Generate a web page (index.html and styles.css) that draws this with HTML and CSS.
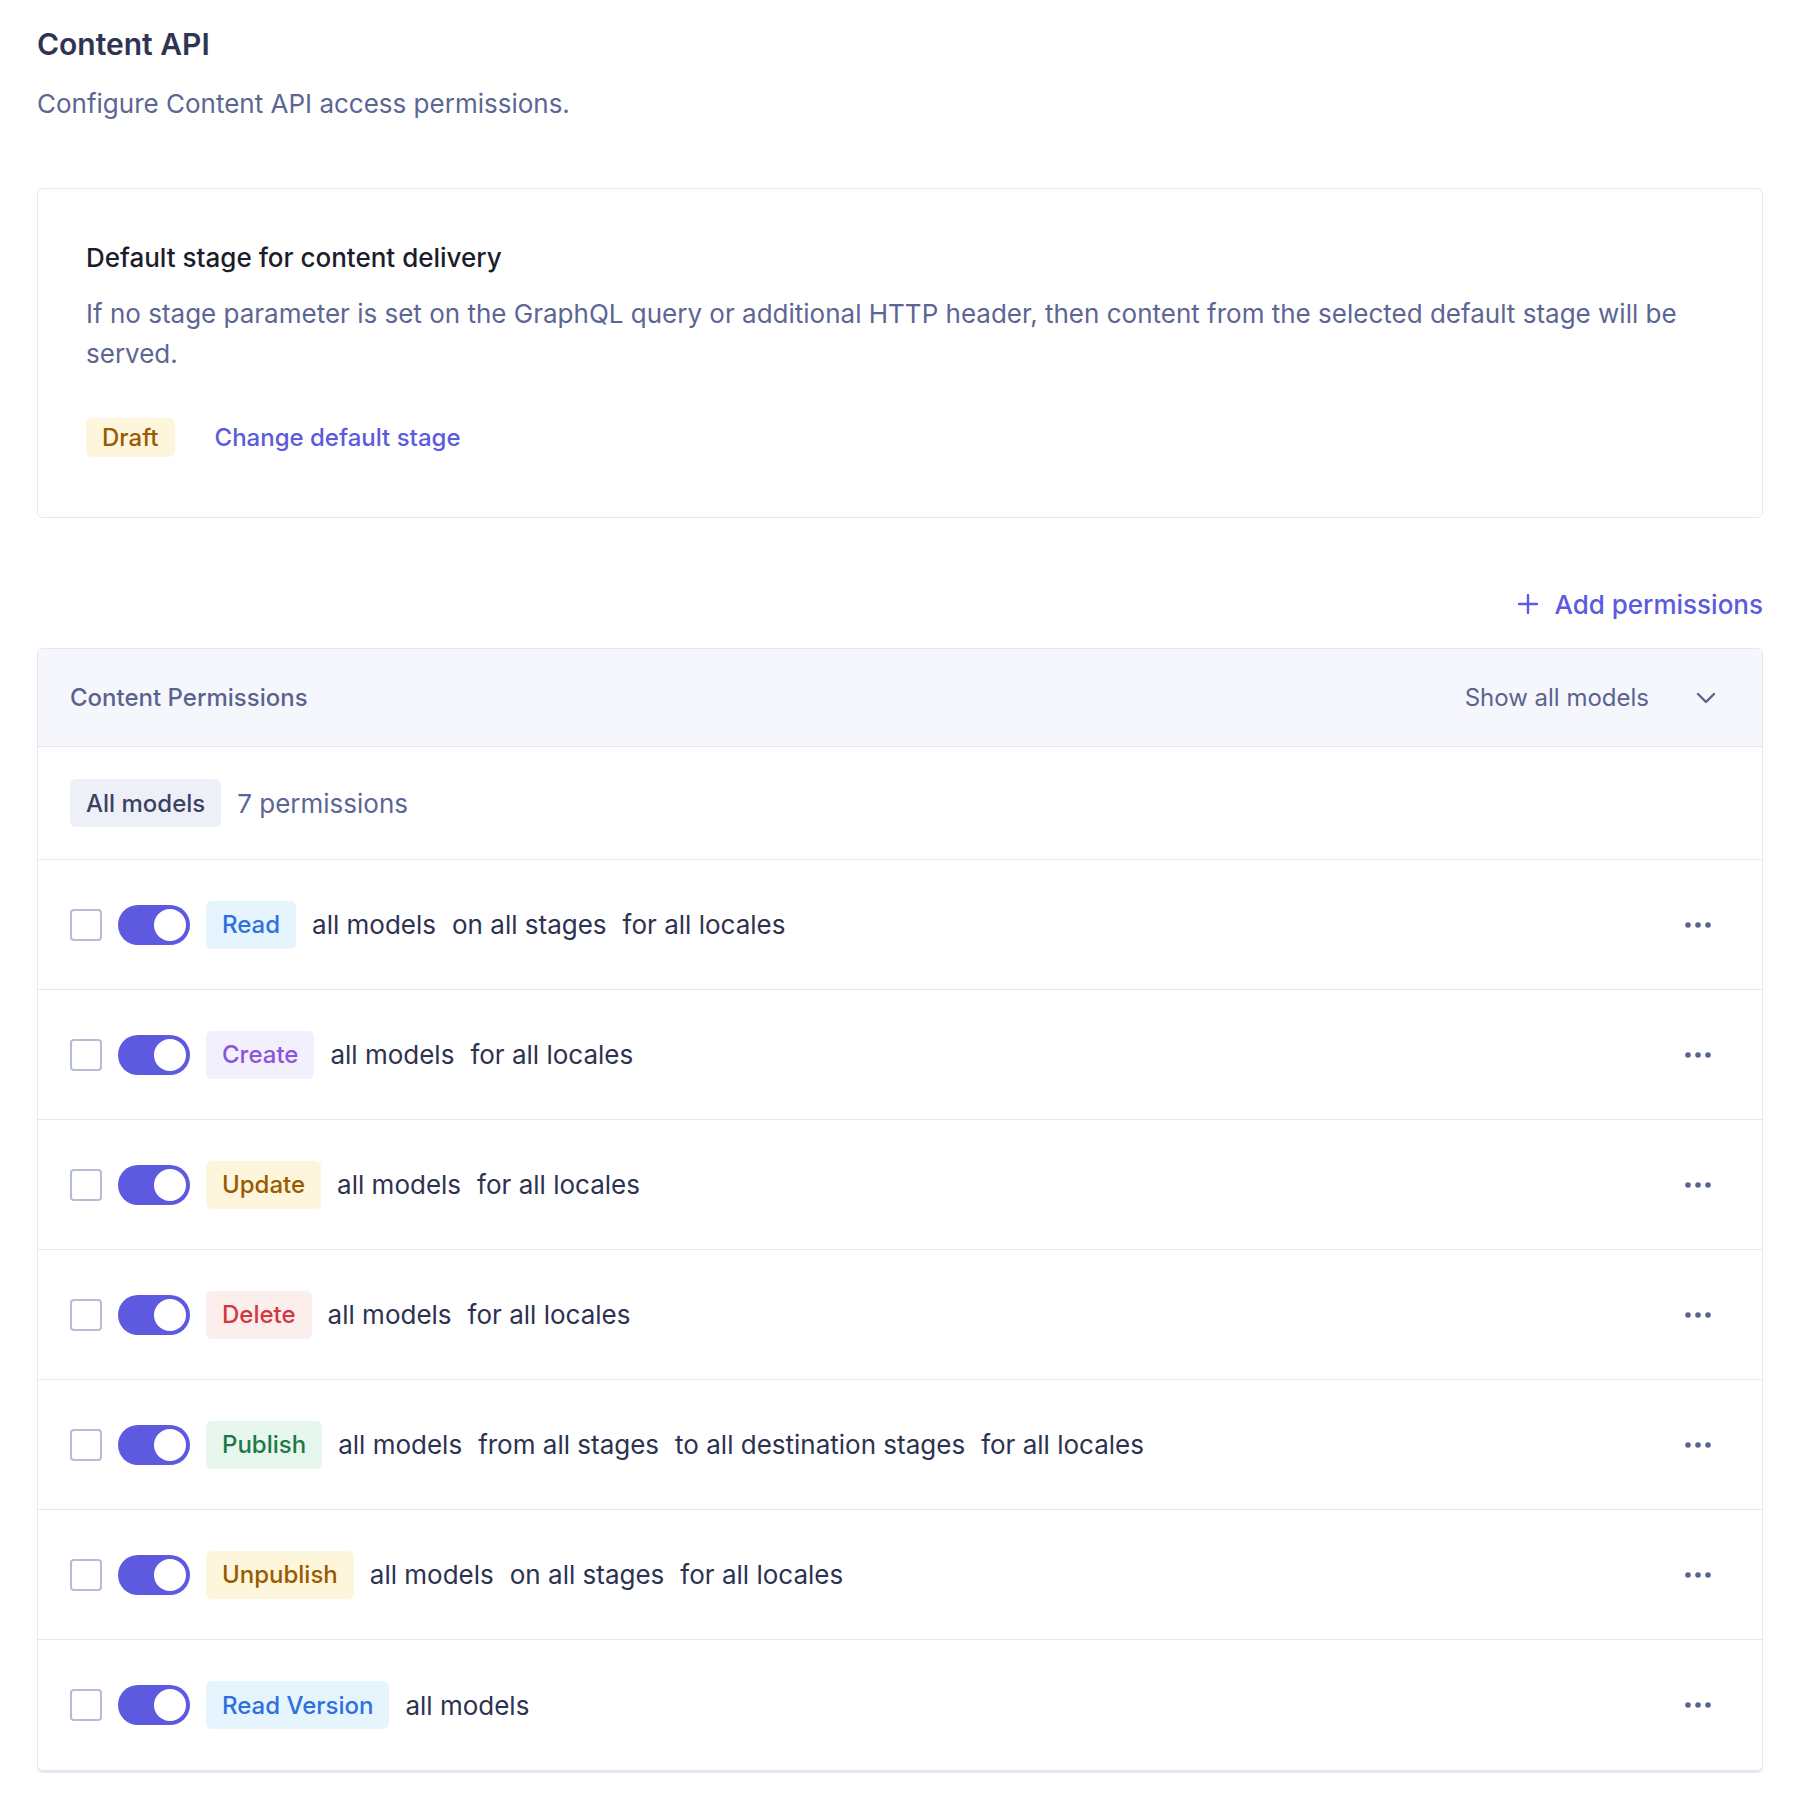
FILE: index.html
```html
<!DOCTYPE html>
<html lang="en">
<head>
<meta charset="utf-8">
<title>Content API</title>
<link rel="stylesheet" href="styles.css">
</head>
<body>
<main class="page">
  <header class="page-head">
    <h1 class="page-title">Content API</h1>
    <p class="page-desc">Configure Content API access permissions.</p>
  </header>

  <section class="card">
    <h2 class="card-title">Default stage for content delivery</h2>
    <p class="card-desc">If no stage parameter is set on the GraphQL query or additional HTTP header, then content from the selected default stage will be served.</p>
    <div class="stage-row">
      <span class="badge badge-amber badge-sm">Draft</span>
      <a class="link" href="#">Change default stage</a>
    </div>
  </section>

  <div class="actions">
    <a class="add-link" href="#">
      <svg class="plus" width="20" height="20" viewBox="0 0 20 20" aria-hidden="true"><path d="M10 1v18M1 10h18" stroke="currentColor" stroke-width="2.4" stroke-linecap="round" fill="none"/></svg>
      <span>Add permissions</span>
    </a>
  </div>

  <section class="table">
    <div class="table-head">
      <span class="table-title">Content Permissions</span>
      <div class="filter">
        <span>Show all models</span>
        <span class="chev-box">
          <svg width="20" height="12" viewBox="0 0 20 12" aria-hidden="true"><path d="M2 2l8 8 8-8" stroke="currentColor" stroke-width="2.4" stroke-linecap="round" stroke-linejoin="round" fill="none"/></svg>
        </span>
      </div>
    </div>

    <div class="group-row">
      <span class="badge badge-grey">All models</span>
      <span class="count">7 permissions</span>
    </div>

    <div class="perm-row">
      <span class="checkbox"></span>
      <span class="toggle"><span class="knob"></span></span>
      <span class="badge badge-blue">Read</span>
      <span class="seg">all models</span><span class="seg">on all stages</span><span class="seg">for all locales</span>
      <span class="more"><svg width="26" height="6" viewBox="0 0 26 6"><circle cx="3" cy="3" r="2.8"/><circle cx="13" cy="3" r="2.8"/><circle cx="23" cy="3" r="2.8"/></svg></span>
    </div>

    <div class="perm-row">
      <span class="checkbox"></span>
      <span class="toggle"><span class="knob"></span></span>
      <span class="badge badge-purple">Create</span>
      <span class="seg">all models</span><span class="seg">for all locales</span>
      <span class="more"><svg width="26" height="6" viewBox="0 0 26 6"><circle cx="3" cy="3" r="2.8"/><circle cx="13" cy="3" r="2.8"/><circle cx="23" cy="3" r="2.8"/></svg></span>
    </div>

    <div class="perm-row">
      <span class="checkbox"></span>
      <span class="toggle"><span class="knob"></span></span>
      <span class="badge badge-amber">Update</span>
      <span class="seg">all models</span><span class="seg">for all locales</span>
      <span class="more"><svg width="26" height="6" viewBox="0 0 26 6"><circle cx="3" cy="3" r="2.8"/><circle cx="13" cy="3" r="2.8"/><circle cx="23" cy="3" r="2.8"/></svg></span>
    </div>

    <div class="perm-row">
      <span class="checkbox"></span>
      <span class="toggle"><span class="knob"></span></span>
      <span class="badge badge-red">Delete</span>
      <span class="seg">all models</span><span class="seg">for all locales</span>
      <span class="more"><svg width="26" height="6" viewBox="0 0 26 6"><circle cx="3" cy="3" r="2.8"/><circle cx="13" cy="3" r="2.8"/><circle cx="23" cy="3" r="2.8"/></svg></span>
    </div>

    <div class="perm-row">
      <span class="checkbox"></span>
      <span class="toggle"><span class="knob"></span></span>
      <span class="badge badge-green">Publish</span>
      <span class="seg">all models</span><span class="seg">from all stages</span><span class="seg">to all destination stages</span><span class="seg">for all locales</span>
      <span class="more"><svg width="26" height="6" viewBox="0 0 26 6"><circle cx="3" cy="3" r="2.8"/><circle cx="13" cy="3" r="2.8"/><circle cx="23" cy="3" r="2.8"/></svg></span>
    </div>

    <div class="perm-row">
      <span class="checkbox"></span>
      <span class="toggle"><span class="knob"></span></span>
      <span class="badge badge-amber">Unpublish</span>
      <span class="seg">all models</span><span class="seg">on all stages</span><span class="seg">for all locales</span>
      <span class="more"><svg width="26" height="6" viewBox="0 0 26 6"><circle cx="3" cy="3" r="2.8"/><circle cx="13" cy="3" r="2.8"/><circle cx="23" cy="3" r="2.8"/></svg></span>
    </div>

    <div class="perm-row">
      <span class="checkbox"></span>
      <span class="toggle"><span class="knob"></span></span>
      <span class="badge badge-blue">Read Version</span>
      <span class="seg">all models</span>
      <span class="more"><svg width="26" height="6" viewBox="0 0 26 6"><circle cx="3" cy="3" r="2.8"/><circle cx="13" cy="3" r="2.8"/><circle cx="23" cy="3" r="2.8"/></svg></span>
    </div>
  </section>
</main>
</body>
</html>
```

FILE: styles.css
```css
* { box-sizing: border-box; }

html, body {
  margin: 0;
  padding: 0;
  background: #ffffff;
}

body {
  font-family: Inter, "Noto Sans", "Liberation Sans", sans-serif;
  color: #2d3250;
  font-size: 24px;
}

.page {
  padding: 26px 41px 40px 37px;
}

.page-title {
  margin: 0;
  font-size: 30px;
  line-height: 36px;
  font-weight: 600;
  color: #2f3452;
}

.page-desc {
  margin: 24px 0 0;
  font-size: 26px;
  line-height: 36px;
  color: #5c6694;
}

.card {
  margin-top: 66px;
  border: 1px solid #e4e6f2;
  border-radius: 6px;
  padding: 51px 48px 60px;
}

.card-title {
  margin: 0;
  font-size: 26px;
  line-height: 36px;
  font-weight: 500;
  color: #1b1d2b;
}

.card-desc {
  margin: 18px 0 0;
  font-size: 26px;
  line-height: 40px;
  color: #5c6694;
}

.stage-row {
  margin-top: 44px;
  display: flex;
  align-items: center;
  gap: 40px;
}

.link {
  color: #5b5be0;
  text-decoration: none;
  font-weight: 500;
  font-size: 24px;
}

.actions {
  margin-top: 62px;
  height: 48px;
  display: flex;
  justify-content: flex-end;
  align-items: center;
}

.add-link {
  display: flex;
  align-items: center;
  gap: 16px;
  color: #5b5be0;
  text-decoration: none;
  font-weight: 500;
  font-size: 26px;
}

.plus { display: block; }

.table {
  margin-top: 20px;
  border: 1px solid #e4e6f2;
  border-radius: 6px;
  box-shadow: 0 2px 0 0 #e4e6f2;
  overflow: hidden;
}

.table-head {
  height: 98px;
  background: #f6f7fc;
  border-bottom: 1px solid #e4e6f2;
  display: flex;
  align-items: center;
  justify-content: space-between;
  padding: 0 32px;
}

.table-title {
  font-size: 24px;
  font-weight: 500;
  color: #5a6390;
}

.filter {
  display: flex;
  align-items: center;
  gap: 33px;
  font-size: 24px;
  color: #5a6390;
}

.chev-box {
  width: 48px;
  height: 48px;
  display: flex;
  align-items: center;
  justify-content: center;
  color: #5a6390;
}

.chev-box svg { display: block; }

.group-row {
  height: 113px;
  border-bottom: 1px solid #e4e6f2;
  display: flex;
  align-items: center;
  gap: 16px;
  padding: 0 32px;
}

.count {
  color: #5c6694;
  font-size: 26px;
}

.badge {
  display: inline-flex;
  align-items: center;
  height: 48px;
  padding: 0 16px;
  border-radius: 6px;
  font-size: 24px;
  font-weight: 500;
  white-space: nowrap;
}

.badge-sm {
  height: 39px;
}

.badge-grey { background: #eef0f8; color: #3a4163; }
.badge-blue { background: #e5f4fd; color: #2f6fe0; }
.badge-purple { background: #f3f0fd; color: #8a55d9; }
.badge-amber { background: #fdf6dc; color: #9a5b00; }
.badge-red { background: #fdeeee; color: #d0393d; }
.badge-green { background: #e8f7ee; color: #1d7a48; }

.perm-row {
  height: 130px;
  border-bottom: 1px solid #e4e6f2;
  display: flex;
  align-items: center;
  gap: 16px;
  padding: 0 40px 0 32px;
}

.perm-row:last-child { border-bottom: none; }

.checkbox {
  width: 32px;
  height: 32px;
  border: 2px solid #b4bcd8;
  border-radius: 4px;
  background: #fff;
  flex: none;
}

.toggle {
  width: 72px;
  height: 40px;
  border-radius: 20px;
  background: #5d5ae0;
  position: relative;
  flex: none;
}

.knob {
  position: absolute;
  top: 4px;
  right: 4px;
  width: 32px;
  height: 32px;
  border-radius: 50%;
  background: #ffffff;
}

.seg {
  color: #2d3250;
  font-size: 26px;
  white-space: nowrap;
}

.more {
  margin-left: auto;
  width: 48px;
  height: 48px;
  display: flex;
  align-items: center;
  justify-content: center;
  fill: #5a6390;
}

.more svg { display: block; }
```
